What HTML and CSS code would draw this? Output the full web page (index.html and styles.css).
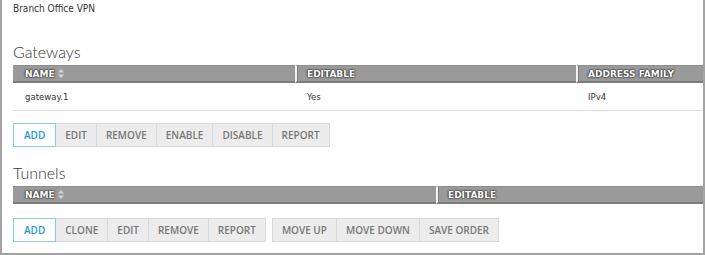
FILE: index.html
```html
<!DOCTYPE html>
<html>
<head>
<meta charset="utf-8">
<link rel="stylesheet" href="styles.css">
</head>
<body>
<div class="frame">
  <div class="crumb">Branch Office VPN</div>

  <h2 class="section-title gw-title">Gateways</h2>
  <div class="grid gw-grid">
    <div class="th first">NAME <svg class="sort" width="6" height="9" viewBox="0 0 6 9"><path d="M3 0L6 3.5H0Z M3 9L6 5.5H0Z" fill="#d6d6d6"/></svg></div>
    <div class="th">EDITABLE</div>
    <div class="th">ADDRESS FAMILY</div>
    <div class="td first">gateway.1</div>
    <div class="td">Yes</div>
    <div class="td">IPv4</div>
  </div>
  <div class="toolbar">
    <div class="btn-group">
      <button class="btn primary">ADD</button>
      <button class="btn">EDIT</button>
      <button class="btn">REMOVE</button>
      <button class="btn">ENABLE</button>
      <button class="btn">DISABLE</button>
      <button class="btn">REPORT</button>
    </div>
  </div>

  <h2 class="section-title tn-title">Tunnels</h2>
  <div class="grid tn-grid">
    <div class="th first">NAME <svg class="sort" width="6" height="9" viewBox="0 0 6 9"><path d="M3 0L6 3.5H0Z M3 9L6 5.5H0Z" fill="#d6d6d6"/></svg></div>
    <div class="th">EDITABLE</div>
  </div>
  <div class="toolbar tn-toolbar">
    <div class="btn-group">
      <button class="btn primary">ADD</button>
      <button class="btn">CLONE</button>
      <button class="btn">EDIT</button>
      <button class="btn">REMOVE</button>
      <button class="btn">REPORT</button>
    </div>
    <div class="btn-group">
      <button class="btn">MOVE UP</button>
      <button class="btn">MOVE DOWN</button>
      <button class="btn">SAVE ORDER</button>
    </div>
  </div>
</div>
</body>
</html>
```

FILE: styles.css
```css
* { box-sizing: border-box; }
html, body { margin: 0; padding: 0; background: #fff; }
.frame {
  width: 705px;
  height: 255px;
  border-left: 2px solid #a3a3a3;
  border-right: 2px solid #a3a3a3;
  border-bottom: 2px solid #a3a3a3;
  padding-left: 11px;
  overflow: hidden;
}
.crumb {
  font-family: "DejaVu Sans Condensed", "DejaVu Sans", sans-serif;
  font-size: 10px;
  color: #333;
  line-height: 12px;
  padding-top: 3px;
}
.section-title {
  margin: 0;
  font-family: Lato, sans-serif;
  font-weight: 300;
  font-size: 16px;
  color: #333;
  line-height: 20px;
}
.gw-title { margin-top: 27px; }
.tn-title { margin-top: 16px; }
.grid { display: grid; margin-top: 3px; }
.gw-grid { grid-template-columns: 282px 281px 1fr; }
.tn-grid { grid-template-columns: 423px 1fr; }
.th {
  background: #9a9a9a;
  height: 18px;
  border-bottom: 2px solid #7c7c7c;
  border-top: 1px solid #8e8e8e;
  border-left: 2px solid #f2f2f2;
  box-shadow: inset 1px 0 0 #7c7c7c;
  font-family: "DejaVu Sans", Verdana, sans-serif;
  font-weight: bold;
  font-size: 9px;
  color: #fff;
  text-shadow: 0 0 1px #222, 0 0 2px #333, 0 0 2px #333;
  padding: 0 0 0 10px;
  display: flex;
  align-items: center;
  gap: 3px;
}
.th.first { border-left: none; box-shadow: none; padding-left: 12px; }
.sort { display: block; }
.td {
  height: 28px;
  border-bottom: 1px solid #dcdcdc;
  font-family: "DejaVu Sans Condensed", "DejaVu Sans", sans-serif;
  font-size: 9.5px;
  color: #333;
  display: flex;
  align-items: center;
  padding-left: 12px;
}
.td.first { padding-left: 12px; }
.toolbar {
  display: flex;
  gap: 6px;
  margin-top: 12px;
}
.tn-toolbar { margin-top: 14px; }
.btn-group { display: flex; }
.btn {
  height: 24px;
  margin: 0;
  border: 1px solid #d9d9d9;
  background: #ececec;
  color: #777;
  font-family: "Open Sans", sans-serif;
  font-weight: 600;
  font-size: 10px;
  padding: 0 9px;
  cursor: pointer;
}
.btn + .btn { border-left: none; }
.btn.primary {
  background: #fff;
  border: 1px solid #86d0df;
  color: #1d9ad6;
  padding: 0 10px;
}
```
